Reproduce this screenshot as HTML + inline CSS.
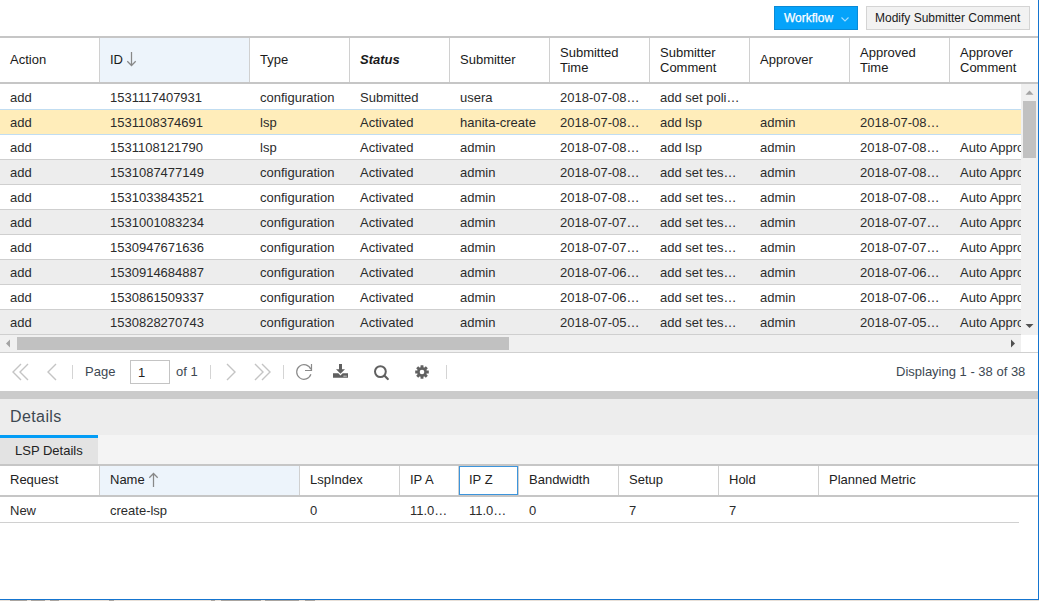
<!DOCTYPE html>
<html><head><meta charset="utf-8">
<style>
*{box-sizing:border-box;margin:0;padding:0}
html,body{width:1039px;height:601px;overflow:hidden;background:#fff;font-family:"Liberation Sans",sans-serif;font-size:13px;color:#2b2b2b}
.a{position:absolute}
.btn{position:absolute;top:6px;height:24px;font-size:12px;line-height:22px;white-space:nowrap}
#wf{left:774px;width:84px;background:#05a3fa;border:1px solid #0a8ad6;color:#fff;padding-left:9px;-webkit-text-stroke:0.25px #fff}
#msc{left:866px;width:164px;background:#f2f2f2;border:1px solid #d4d4d4;color:#1a1a1a;padding-left:8px}
.hl{position:absolute;left:0;width:1038px;height:2px;background:#c6c6c6}
.hc{position:absolute;top:38px;height:44px;border-right:1px solid #d0d0d0;padding:0 10px;display:flex;align-items:center;line-height:15px;color:#1a1a1a;padding-bottom:2px}
.dhc{position:absolute;top:466px;height:29px;border-right:1px solid #d0d0d0;padding:0 10px;line-height:28px;white-space:nowrap;color:#222}
.row{position:absolute;left:0;width:1021px;height:25px;border-top:1px solid #cfcfcf}
.row.f{border-top-color:#fff}
.row.g{background:#ededed;border-top-color:#cfcfcf}
.row.s{background:#ffedba;border-top-color:#c1ddf1}
.row.sn{border-top-color:#c1ddf1}
.c{position:absolute;top:0;height:24px;line-height:25px;padding:0 10px;white-space:nowrap;overflow:hidden;text-overflow:ellipsis}
.pt{position:absolute;top:364px;font-size:13px;color:#3d4852;line-height:15px;white-space:nowrap}
</style></head><body>
<div class="btn" id="wf">Workflow</div>
<svg class="a" style="left:836px;top:10px" width="20" height="16"><path d="M5.5 7.5 L9 11 L12.5 7.5" fill="none" stroke="#a6ddff" stroke-width="1.1"/></svg>
<div class="btn" id="msc">Modify Submitter Comment</div>

<div class="hl" style="top:36px"></div>
<div class="hc" style="left:0;width:100px">Action</div>
<div class="hc" style="left:100px;width:150px;background:#edf4fb">ID</div>
<svg class="a" style="left:122px;top:48px" width="20" height="22"><g fill="none" stroke="#888" stroke-width="1.25"><path d="M9.5 4 V17.5 M5.3 13.3 L9.5 17.5 L13.7 13.3"/></g></svg>
<div class="hc" style="left:250px;width:100px">Type</div>
<div class="hc" style="left:350px;width:100px;font-weight:bold;font-style:italic">Status</div>
<div class="hc" style="left:450px;width:100px">Submitter</div>
<div class="hc" style="left:550px;width:100px"><span style="position:relative;top:1px">Submitted<br>Time</span></div>
<div class="hc" style="left:650px;width:100px"><span style="position:relative;top:1px">Submitter<br>Comment</span></div>
<div class="hc" style="left:750px;width:100px">Approver</div>
<div class="hc" style="left:850px;width:100px"><span style="position:relative;top:1px">Approved<br>Time</span></div>
<div class="hc" style="left:950px;width:88px;border-right:none"><span style="position:relative;top:1px">Approver<br>Comment</span></div>
<div class="hl" style="top:82px"></div>

<div class="a" style="left:0;top:84px;width:1021px;height:251px;overflow:hidden">
<div class="row f" style="top:0px"><div class="c" style="left:0px;width:100px">add</div><div class="c" style="left:100px;width:150px">1531117407931</div><div class="c" style="left:250px;width:100px">configuration</div><div class="c" style="left:350px;width:100px">Submitted</div><div class="c" style="left:450px;width:100px">usera</div><div class="c" style="left:550px;width:100px">2018-07-08 13:54:41</div><div class="c" style="left:650px;width:100px">add set policy test</div><div class="c" style="left:750px;width:100px"></div><div class="c" style="left:850px;width:100px"></div><div class="c" style="left:950px;width:100px"></div></div>
<div class="row s" style="top:25px"><div class="c" style="left:0px;width:100px">add</div><div class="c" style="left:100px;width:150px">1531108374691</div><div class="c" style="left:250px;width:100px">lsp</div><div class="c" style="left:350px;width:100px">Activated</div><div class="c" style="left:450px;width:100px">hanita-create</div><div class="c" style="left:550px;width:100px">2018-07-08 11:26:14</div><div class="c" style="left:650px;width:100px">add lsp</div><div class="c" style="left:750px;width:100px">admin</div><div class="c" style="left:850px;width:100px">2018-07-08 11:26:15</div><div class="c" style="left:950px;width:100px"></div></div>
<div class="row sn" style="top:50px"><div class="c" style="left:0px;width:100px">add</div><div class="c" style="left:100px;width:150px">1531108121790</div><div class="c" style="left:250px;width:100px">lsp</div><div class="c" style="left:350px;width:100px">Activated</div><div class="c" style="left:450px;width:100px">admin</div><div class="c" style="left:550px;width:100px">2018-07-08 11:22:01</div><div class="c" style="left:650px;width:100px">add lsp</div><div class="c" style="left:750px;width:100px">admin</div><div class="c" style="left:850px;width:100px">2018-07-08 11:22:02</div><div class="c" style="left:950px;width:100px">Auto Approved</div></div>
<div class="row g" style="top:75px"><div class="c" style="left:0px;width:100px">add</div><div class="c" style="left:100px;width:150px">1531087477149</div><div class="c" style="left:250px;width:100px">configuration</div><div class="c" style="left:350px;width:100px">Activated</div><div class="c" style="left:450px;width:100px">admin</div><div class="c" style="left:550px;width:100px">2018-07-08 05:37:57</div><div class="c" style="left:650px;width:100px">add set test lsp</div><div class="c" style="left:750px;width:100px">admin</div><div class="c" style="left:850px;width:100px">2018-07-08 05:37:58</div><div class="c" style="left:950px;width:100px">Auto Approved</div></div>
<div class="row" style="top:100px"><div class="c" style="left:0px;width:100px">add</div><div class="c" style="left:100px;width:150px">1531033843521</div><div class="c" style="left:250px;width:100px">configuration</div><div class="c" style="left:350px;width:100px">Activated</div><div class="c" style="left:450px;width:100px">admin</div><div class="c" style="left:550px;width:100px">2018-07-08 00:10:43</div><div class="c" style="left:650px;width:100px">add set test lsp</div><div class="c" style="left:750px;width:100px">admin</div><div class="c" style="left:850px;width:100px">2018-07-08 00:10:44</div><div class="c" style="left:950px;width:100px">Auto Approved</div></div>
<div class="row g" style="top:125px"><div class="c" style="left:0px;width:100px">add</div><div class="c" style="left:100px;width:150px">1531001083234</div><div class="c" style="left:250px;width:100px">configuration</div><div class="c" style="left:350px;width:100px">Activated</div><div class="c" style="left:450px;width:100px">admin</div><div class="c" style="left:550px;width:100px">2018-07-07 15:04:43</div><div class="c" style="left:650px;width:100px">add set test lsp</div><div class="c" style="left:750px;width:100px">admin</div><div class="c" style="left:850px;width:100px">2018-07-07 15:04:44</div><div class="c" style="left:950px;width:100px">Auto Approved</div></div>
<div class="row" style="top:150px"><div class="c" style="left:0px;width:100px">add</div><div class="c" style="left:100px;width:150px">1530947671636</div><div class="c" style="left:250px;width:100px">configuration</div><div class="c" style="left:350px;width:100px">Activated</div><div class="c" style="left:450px;width:100px">admin</div><div class="c" style="left:550px;width:100px">2018-07-07 00:14:31</div><div class="c" style="left:650px;width:100px">add set test lsp</div><div class="c" style="left:750px;width:100px">admin</div><div class="c" style="left:850px;width:100px">2018-07-07 00:14:32</div><div class="c" style="left:950px;width:100px">Auto Approved</div></div>
<div class="row g" style="top:175px"><div class="c" style="left:0px;width:100px">add</div><div class="c" style="left:100px;width:150px">1530914684887</div><div class="c" style="left:250px;width:100px">configuration</div><div class="c" style="left:350px;width:100px">Activated</div><div class="c" style="left:450px;width:100px">admin</div><div class="c" style="left:550px;width:100px">2018-07-06 15:04:44</div><div class="c" style="left:650px;width:100px">add set test lsp</div><div class="c" style="left:750px;width:100px">admin</div><div class="c" style="left:850px;width:100px">2018-07-06 15:04:45</div><div class="c" style="left:950px;width:100px">Auto Approved</div></div>
<div class="row" style="top:200px"><div class="c" style="left:0px;width:100px">add</div><div class="c" style="left:100px;width:150px">1530861509337</div><div class="c" style="left:250px;width:100px">configuration</div><div class="c" style="left:350px;width:100px">Activated</div><div class="c" style="left:450px;width:100px">admin</div><div class="c" style="left:550px;width:100px">2018-07-06 00:18:29</div><div class="c" style="left:650px;width:100px">add set test lsp</div><div class="c" style="left:750px;width:100px">admin</div><div class="c" style="left:850px;width:100px">2018-07-06 00:18:30</div><div class="c" style="left:950px;width:100px">Auto Approved</div></div>
<div class="row g" style="top:225px"><div class="c" style="left:0px;width:100px">add</div><div class="c" style="left:100px;width:150px">1530828270743</div><div class="c" style="left:250px;width:100px">configuration</div><div class="c" style="left:350px;width:100px">Activated</div><div class="c" style="left:450px;width:100px">admin</div><div class="c" style="left:550px;width:100px">2018-07-05 15:04:30</div><div class="c" style="left:650px;width:100px">add set test lsp</div><div class="c" style="left:750px;width:100px">admin</div><div class="c" style="left:850px;width:100px">2018-07-05 15:04:31</div><div class="c" style="left:950px;width:100px">Auto Approved</div></div>
<div class="a" style="left:0;top:250px;width:1021px;height:1px;background:#cfcfcf"></div>
</div>

<!-- vertical scrollbar -->
<div class="a" style="left:1021px;top:84px;width:17px;height:251px;background:#f0f0f0"></div>
<div class="a" style="left:1023px;top:101px;width:13px;height:57px;background:#c1c1c1"></div>
<svg class="a" style="left:1021px;top:84px" width="17" height="251"><path d="M4.5 10.7 L8.5 6.5 L12.5 10.7 Z" fill="#a3a3a3"/><path d="M4.5 240 L8.5 244 L12.5 240 Z" fill="#505050"/></svg>
<!-- horizontal scrollbar -->
<div class="a" style="left:0;top:335px;width:1021px;height:17px;background:#f0f0f0"></div>
<div class="a" style="left:17px;top:337px;width:492px;height:13px;background:#c1c1c1"></div>
<svg class="a" style="left:0;top:335px" width="1021" height="17"><path d="M6 8.5 L10 4.5 L10 12.5 Z" fill="#a3a3a3"/><path d="M1015 8.5 L1011 4.5 L1011 12.5 Z" fill="#505050"/></svg>
<div class="a" style="left:0;top:352px;width:1038px;height:1px;background:#d0d0d0"></div>

<!-- paging toolbar -->
<svg class="a" style="left:0;top:353px" width="1021" height="38">
 <g fill="none" stroke="#c4c4c4" stroke-width="1.4">
  <path d="M21 11 L13 19 L21 27 M28 11 L20 19 L28 27"/>
  <path d="M56 11 L48 19 L56 27"/>
  <path d="M227 11 L235 19 L227 27"/>
  <path d="M255 11 L263 19 L255 27 M262 11 L270 19 L262 27"/>
 </g>
 <g stroke="#d4d4d4" stroke-width="1">
  <path d="M72.5 12 V26 M210.5 12 V26 M283.5 12 V26 M446.5 12 V26"/>
 </g>
 <!-- refresh -->
 <g fill="none" stroke="#8a8a8a" stroke-width="1.2">
  <path d="M310.9 21.3 A7.3 7.3 0 1 1 310.8 16.3"/>
  <path d="M311.5 11 V17.5 H305"/>
 </g>
 <!-- download -->
 <g fill="#606060">
  <rect x="339" y="11" width="3" height="6"/>
  <path d="M336 16.2 H345 L340.5 20.8 Z"/>
  <path d="M333 20.2 H338.3 L340.5 22.5 L342.7 20.2 H348 V24.8 H333 Z"/>
 </g>
 <rect x="343.5" y="22.7" width="1.3" height="0.9" fill="#fff"/><rect x="345.3" y="22.7" width="1.3" height="0.9" fill="#fff"/>
 <!-- search -->
 <g fill="none" stroke="#606060">
  <circle cx="380.4" cy="18.6" r="5.4" stroke-width="2"/>
  <path d="M384.8 23 L387.8 26" stroke-width="2.2" stroke-linecap="round"/>
 </g>
 <!-- gear -->
 <g transform="translate(422 19)" fill="#606060">
  <path transform="rotate(0)" d="M-1.4 -6.8 H1.4 L1.6 -3.5 H-1.6 Z"/><path transform="rotate(45)" d="M-1.4 -6.8 H1.4 L1.6 -3.5 H-1.6 Z"/><path transform="rotate(90)" d="M-1.4 -6.8 H1.4 L1.6 -3.5 H-1.6 Z"/><path transform="rotate(135)" d="M-1.4 -6.8 H1.4 L1.6 -3.5 H-1.6 Z"/><path transform="rotate(180)" d="M-1.4 -6.8 H1.4 L1.6 -3.5 H-1.6 Z"/><path transform="rotate(225)" d="M-1.4 -6.8 H1.4 L1.6 -3.5 H-1.6 Z"/><path transform="rotate(270)" d="M-1.4 -6.8 H1.4 L1.6 -3.5 H-1.6 Z"/><path transform="rotate(315)" d="M-1.4 -6.8 H1.4 L1.6 -3.5 H-1.6 Z"/>
  <circle r="4.8"/>
  <circle r="2.3" fill="#fff"/>
 </g>
</svg>
<div class="pt" style="left:85px">Page</div>
<div class="a" style="left:130px;top:360px;width:40px;height:24px;border:1px solid #c4c4c4;background:#fff;padding-left:7px;line-height:23px;color:#222">1</div>
<div class="pt" style="left:176px">of 1</div>
<div class="pt" style="left:896px">Displaying 1 - 38 of 38</div>

<!-- splitter & details -->
<div class="a" style="left:0;top:391px;width:1038px;height:8px;background:#cbcbcb"></div>
<div class="a" style="left:0;top:399px;width:1038px;height:36px;background:#ededed"></div>
<div class="a" style="left:10px;top:408px;font-size:16px;line-height:18px;color:#3d4852;letter-spacing:0.4px">Details</div>
<div class="a" style="left:0;top:435px;width:1038px;height:29px;background:#f4f4f4"></div>
<div class="a" style="left:0;top:435px;width:98px;height:3px;background:#039df6"></div>
<div class="a" style="left:0;top:438px;width:98px;height:26px;background:#e3e3e3"></div>
<div class="a" style="left:15px;top:443px;line-height:15px;color:#222">LSP Details</div>
<div class="hl" style="top:464px"></div>
<div class="dhc" style="left:0px;width:100px">Request</div>
<div class="dhc" style="left:100px;width:200px;background:#edf4fb">Name</div>
<div class="dhc" style="left:300px;width:100px">LspIndex</div>
<div class="dhc" style="left:400px;width:59px">IP A</div>
<div class="dhc" style="left:459px;width:60px">IP Z</div>
<div class="dhc" style="left:519px;width:100px">Bandwidth</div>
<div class="dhc" style="left:619px;width:100px">Setup</div>
<div class="dhc" style="left:719px;width:100px">Hold</div>
<div class="dhc" style="left:819px;width:219px;border-right:none">Planned Metric</div>
<div class="a" style="left:459px;top:466px;width:59px;height:29px;border:1px solid #3d95dc"></div>
<svg class="a" style="left:142px;top:470px" width="20" height="22"><g fill="none" stroke="#888" stroke-width="1.25"><path d="M11.5 3.5 V17 M7.3 7.7 L11.5 3.5 L15.7 7.7"/></g></svg>
<div class="hl" style="top:495px"></div>
<div class="a" style="left:0;top:497px;width:1019px;height:26px;border-bottom:1px solid #d0d0d0"><div class="a" style="left:0;top:1px;width:1019px;height:24px"><div class="c" style="left:0px;width:100px">New</div><div class="c" style="left:100px;width:200px">create-lsp</div><div class="c" style="left:300px;width:100px">0</div><div class="c" style="left:400px;width:59px">11.0.0.1</div><div class="c" style="left:459px;width:60px">11.0.0.2</div><div class="c" style="left:519px;width:100px">0</div><div class="c" style="left:619px;width:100px">7</div><div class="c" style="left:719px;width:100px">7</div><div class="c" style="left:819px;width:200px"></div></div></div>

<!-- frame -->
<div class="a" style="left:1038px;top:0;width:1px;height:600px;background:#1575d0"></div>
<div class="a" style="left:0;top:599px;width:1039px;height:1px;background:#1575d0"></div>
<div class="a" style="left:0;top:600px;width:1039px;height:1px;background:#e8e0d8"></div><div class="a" style="left:10px;top:600px;width:17px;height:1px;background:#aaa5a0"></div><div class="a" style="left:31px;top:600px;width:14px;height:1px;background:#aaa5a0"></div><div class="a" style="left:50px;top:600px;width:9px;height:1px;background:#aaa5a0"></div><div class="a" style="left:109px;top:600px;width:5px;height:1px;background:#aaa5a0"></div><div class="a" style="left:211px;top:600px;width:4px;height:1px;background:#aaa5a0"></div><div class="a" style="left:221px;top:600px;width:40px;height:1px;background:#aaa5a0"></div><div class="a" style="left:265px;top:600px;width:34px;height:1px;background:#aaa5a0"></div><div class="a" style="left:305px;top:600px;width:10px;height:1px;background:#aaa5a0"></div>
</body></html>
